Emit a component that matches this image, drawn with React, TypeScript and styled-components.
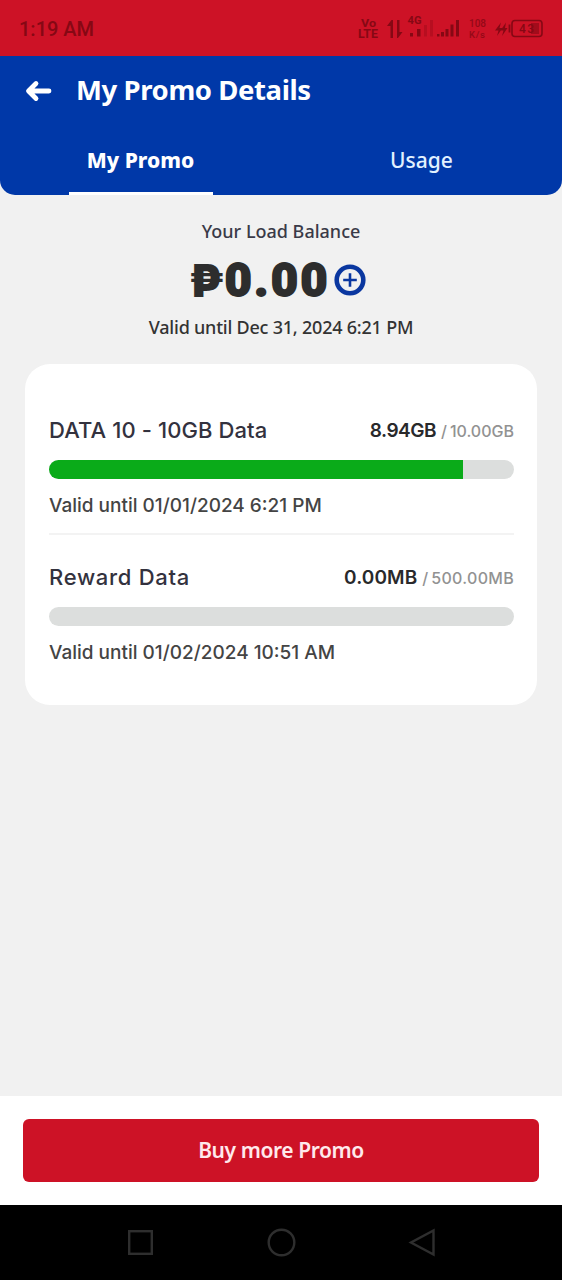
import React from "react";
import styled, { createGlobalStyle } from "styled-components";

const Global = createGlobalStyle`
  * { box-sizing: border-box; }
  body { margin: 0; background: #f1f1f1; }
`;

const exo = `"Noto Sans", "Open Sans", sans-serif`;
const mont = `Inter, "Liberation Sans", sans-serif`;

const Screen = styled.div`
  width: 562px;
  height: 1280px;
  display: flex;
  flex-direction: column;
  background: #f1f1f1;
  overflow: hidden;
`;

const Label = styled.span<{
  $size: number;
  $lh: number;
  $weight?: number;
  $color: string;
  $spacing?: number;
  $family?: string;
}>`
  display: block;
  white-space: nowrap;
  font-family: ${(p) => p.$family ?? exo};
  font-size: ${(p) => p.$size}px;
  line-height: ${(p) => p.$lh}px;
  font-weight: ${(p) => p.$weight ?? 400};
  color: ${(p) => p.$color};
  letter-spacing: ${(p) => p.$spacing ?? 0}px;
`;

const StatusBar = styled.div`
  height: 56px;
  flex: none;
  background: #cd1226;
  display: flex;
  align-items: center;
  justify-content: space-between;
  padding: 2px 19px 0 19px;
`;

const StatusIcons = styled.svg`
  display: block;
  width: 186px;
  height: 28px;
  margin-top: -2px;
  font-family: Roboto, sans-serif;
`;

const Header = styled.header`
  height: 139px;
  flex: none;
  background: #0038a8;
  border-radius: 0 0 15px 15px;
  display: flex;
  flex-direction: column;
`;

const HeaderBacking = styled.div`
  flex: none;
  background: #f1f1f1;
`;

const TitleRow = styled.div`
  height: 68px;
  display: flex;
  align-items: center;
  gap: 24px;
  padding-left: 25px;
`;

const BackIcon = styled.svg`
  width: 27px;
  height: 22px;
  display: block;
  margin-top: 2px;
`;

const Tabs = styled.nav`
  flex: 1;
  display: grid;
  grid-template-columns: 1fr 1fr;
`;

const Tab = styled.div`
  display: flex;
  flex-direction: column;
  align-items: center;
  justify-content: space-between;
  padding-top: 20px;
`;

const Underline = styled.div`
  width: 144px;
  height: 3px;
  background: #fff;
`;

const Balance = styled.section`
  display: flex;
  flex-direction: column;
  align-items: center;
  padding-top: 22px;
  height: 169px;
  flex: none;
`;

const AmountRow = styled.div`
  display: flex;
  align-items: center;
  height: 60px;
  margin: 5px 0 3px;
  padding-right: 7px;
`;

const Peso = styled(Label)`
  margin-right: 1px;
`;

const Amount = styled(Label)`
  -webkit-text-stroke: 1.8px #2d2d2d;
`;

const AddIcon = styled.svg`
  width: 32px;
  height: 32px;
  display: block;
  margin-left: 4px;
`;

const Card = styled.section`
  flex: none;
  margin: 0 25px;
  height: 341px;
  padding: 52px 23px 0 24px;
  background: #fff;
  border-radius: 25px;
`;

const Promo = styled.div`
  display: flex;
  flex-direction: column;
  height: 147px;
`;

const PromoTop = styled.div`
  display: flex;
  justify-content: space-between;
  align-items: center;
  height: 28px;
`;

const Usage = styled.div`
  display: flex;
  align-items: baseline;
  padding-top: 1px;
`;

const Slash = styled(Label)`
  margin: 0 3px 0 5px;
`;

const Track = styled.div`
  height: 19px;
  margin: 16px 0 13px;
  border-radius: 10px;
  background: #dcdedd;
  overflow: hidden;
`;

const Fill = styled.div`
  height: 100%;
  background: #0aab19;
`;

const Divider = styled.div`
  height: 2px;
  margin-top: 13px;
  background: #f3f3f3;
`;

const Footer = styled.footer`
  margin-top: auto;
  height: 109px;
  flex: none;
  padding: 23px 23px 0;
  background: #fff;
`;

const BuyButton = styled.button`
  display: flex;
  align-items: center;
  justify-content: center;
  width: 516px;
  height: 63px;
  border: 0;
  border-radius: 6px;
  background: #cd1226;
  padding: 0 0 1px;
`;

const NavBar = styled.div`
  height: 75px;
  flex: none;
  background: #000;
  display: flex;
  justify-content: center;
  align-items: center;
  gap: 112px;
`;

const NavIcon = styled.svg`
  width: 29px;
  height: 29px;
  fill: none;
  stroke: #2e2e2e;
  stroke-width: 2.4;
`;

const dark = "#860814";

const promos = [
  { name: "DATA 10 - 10GB Data", ns: 0.1, left: "8.94GB", ls: -0.5, total: "10.00GB", ts: 0, pct: 89, until: "Valid until 01/01/2024 6:21 PM", us: 0 },
  { name: "Reward Data", ns: 0.7, left: "0.00MB", ls: 0.1, total: "500.00MB", ts: 0.3, pct: 0, until: "Valid until 01/02/2024 10:51 AM", us: 0 },
];

export default function App() {
  return (
    <Screen>
      <Global />
      <StatusBar>
        <Label $size={20} $lh={24} $color={dark} $family="Roboto, sans-serif" $weight={500}>1:19 AM</Label>
        <StatusIcons viewBox="357 14 186 28" fill={dark}>
          <text x="361" y="26.500" fontSize="11.500" fontWeight="700" textLength="15" lengthAdjust="spacingAndGlyphs">Vo</text>
          <text x="358" y="38" fontSize="12" fontWeight="700" textLength="20" lengthAdjust="spacingAndGlyphs">LTE</text>
          <path d="M387 26L391.500 20H393V38H390.500V26ZM397 20H399.500V32H402.500L398 38H397Z" />
          <text x="407.500" y="24" fontSize="10.500" fontWeight="700" textLength="14" lengthAdjust="spacingAndGlyphs">4G</text>
          <path d="M410 33h3v3.500h-3zM417 29h3.500v7.500h-3.500z" />
          <path d="M424 25h3v11.500h-3zM430 20h3v16.500h-3z" opacity=".3" />
          <path d="M437 34h2.500v2.500h-2.500zM441 32h3v4.500h-3zM445.500 29h3v7.500h-3zM450.500 24.500h3v12h-3zM456 20h3v16.500h-3z" />
          <g opacity=".8">
            <text x="469" y="26.500" fontSize="10" fontWeight="500" textLength="17">108</text>
            <text x="469" y="38" fontSize="9.500" fontWeight="500" textLength="16">K/s</text>
          </g>
          <path d="M501 22.500L495 30.500H498.500L497 36L502.500 28H499.500ZM506 22.500L500.500 30.500H503.500L502 36L507.500 28H505Z" />
          <path d="M509.500 24.500v8" stroke={dark} strokeWidth="1.800" />
          <rect x="512" y="20.500" width="30" height="16" rx="3" fill="none" stroke={dark} strokeWidth="1.600" />
          <path d="M531 23h8v11h-8z" opacity=".6" />
          <text x="519" y="33" fontSize="12" fontWeight="500" textLength="15">43</text>
        </StatusIcons>
      </StatusBar>
      <HeaderBacking>
        <Header>
          <TitleRow>
            <BackIcon viewBox="0 0 27 22" fill="none" stroke="#fff" strokeWidth="4.800" strokeLinecap="round" strokeLinejoin="round">
              <path d="M24 11H4M11 3.500L3.500 11L11 18.500" />
            </BackIcon>
            <Label $size={27.5} $lh={38} $weight={700} $color="#fff" $spacing={-0.4}>My Promo Details</Label>
          </TitleRow>
          <Tabs>
            <Tab>
              <Label $size={21} $lh={32} $weight={800} $color="#fff">My Promo</Label>
              <Underline />
            </Tab>
            <Tab>
              <Label $size={21} $lh={32} $weight={500} $color="#e2f1ff">Usage</Label>
            </Tab>
          </Tabs>
        </Header>
      </HeaderBacking>
      <Balance>
        <Label $size={18} $lh={28} $weight={500} $color="#3a3a48">Your Load Balance</Label>
        <AmountRow>
          <Peso $size={46} $lh={60} $weight={900} $color="#2d2d2d" $family={mont}>₱</Peso>
          <Amount $size={46.5} $lh={60} $weight={900} $color="#2d2d2d" $family="Roboto, sans-serif" $spacing={2.6}>0.00</Amount>
          <AddIcon viewBox="0 0 32 32" fill="none" stroke="#0a37a0">
            <circle cx="16" cy="16" r="13.300" strokeWidth="4.600" />
            <path d="M16 9.200V22.800M9.200 16H22.800" strokeWidth="2.600" />
          </AddIcon>
        </AmountRow>
        <Label $size={18} $lh={28} $weight={500} $color="#333" $spacing={-0.22}>Valid until Dec 31, 2024 6:21 PM</Label>
      </Balance>
      <Card>
        {promos.map((p, i) => (
          <Promo key={p.name}>
            <PromoTop>
              <Label $size={22} $lh={28} $weight={500} $color="#33323e" $family={mont} $spacing={p.ns}>{p.name}</Label>
              <Usage>
                <Label $size={19} $lh={28} $weight={600} $color="#29292b" $family={mont} $spacing={p.ls}>{p.left}</Label>
                <Slash $size={16} $lh={28} $weight={500} $color="#929292" $family={mont}>/</Slash>
                <Label $size={16} $lh={28} $weight={550} $color="#929292" $family={mont} $spacing={p.ts}>{p.total}</Label>
              </Usage>
            </PromoTop>
            <Track>
              <Fill style={{ width: `${p.pct}%` }} />
            </Track>
            <Label $size={19} $lh={28} $weight={500} $color="#444" $family={mont} $spacing={p.us}>{p.until}</Label>
            {i === 0 && <Divider />}
          </Promo>
        ))}
      </Card>
      <Footer>
        <BuyButton>
          <Label $size={21} $lh={30} $weight={600} $color="#ffe9ec" $spacing={-0.42}>Buy more Promo</Label>
        </BuyButton>
      </Footer>
      <NavBar>
        <NavIcon viewBox="0 0 29 29"><rect x="3.200" y="3.200" width="22.600" height="22.600" /></NavIcon>
        <NavIcon viewBox="0 0 29 29"><circle cx="14.500" cy="14.500" r="12.800" /></NavIcon>
        <NavIcon viewBox="0 0 29 29"><path d="M25.500 2.500V26.500L3 14.500Z" /></NavIcon>
      </NavBar>
    </Screen>
  );
}
